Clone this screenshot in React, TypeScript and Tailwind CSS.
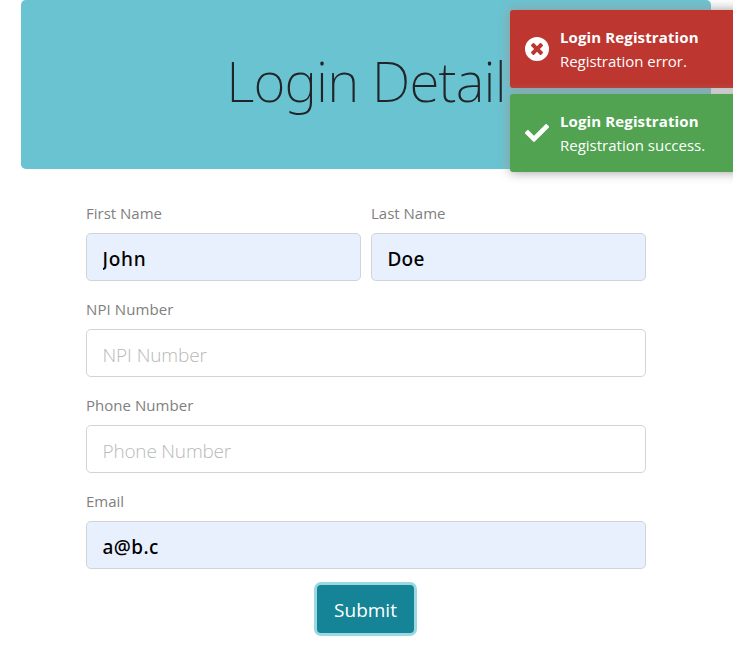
import type { ReactNode } from "react";
import { FaCheck } from "react-icons/fa";

type FieldProps = {
  label: string;
  value?: string;
  labelSpacing: string;
  textSpacing: string;
};

function Field({ label, value, labelSpacing, textSpacing }: FieldProps) {
  return (
    <label className="block min-w-0 flex-1">
      <span className={`block h-6 text-[15px] leading-6 text-[#808080] ${labelSpacing}`}>
        <span>{label}</span>
      </span>
      <input
        className={`mt-2 block h-12 w-full rounded-[4.8px] border border-[#ced4da] pt-[3px] leading-7 outline-none placeholder:font-light placeholder:text-[#b9b9b9] ${textSpacing} ${
          value
            ? "bg-[#e8f0fe] px-[15.5px] font-['Noto_Sans',sans-serif] text-[19px] font-medium text-black"
            : "bg-white px-[15.5px] text-[19px] font-light"
        }`}
        placeholder={label}
        defaultValue={value}
      />
    </label>
  );
}

function ErrorIcon() {
  return (
    <svg width="24" height="24" viewBox="0 0 1536 1536" fill="currentColor" fillRule="evenodd">
      <path d="M768 0a768 768 0 1 1 0 1536a768 768 0 1 1 0-1536zM1149 994q0-26-19-45l-181-181l181-181q19-19 19-45q0-27-19-46l-90-90q-19-19-46-19q-26 0-45 19l-181 181l-181-181q-19-19-45-19q-27 0-46 19l-90 90q-19 19-19 46q0 26 19 45l181 181l-181 181q-19 19-19 45q0 27 19 46l90 90q19 19 46 19q26 0 45-19l181-181l181 181q19 19 45 19q27 0 46-19l90-90q19-19 19-46z" />
    </svg>
  );
}

type ToastProps = { color: string; icon: ReactNode; message: string; spacing: string };

function Toast({ color, icon, message, spacing }: ToastProps) {
  return (
    <div
      className={`flex h-[78px] w-[300px] items-center gap-[11px] rounded-[3px] pl-[15px] text-white shadow-[0_0_12px_#999] ${color}`}
    >
      <span className="shrink-0">{icon}</span>
      <div className="text-[15px] leading-6 whitespace-nowrap">
        <div className="font-bold tracking-[0.12px]">Login Registration</div>
        <div className={spacing}>{message}</div>
      </div>
    </div>
  );
}

export default function App() {
  return (
    <div className="relative h-[663px] w-[733px] overflow-hidden bg-white font-['Open_Sans','Noto_Sans',sans-serif]">
      <main className="ml-[21px] w-[690px]">
        <header className="flex h-[169px] items-center justify-center rounded-[4.8px] bg-[#6ac3d1] pb-[9px]">
          <h1 className="font-['Noto_Sans',sans-serif] text-[55px] leading-[67px] font-extralight tracking-[-0.85px] text-[#212529]">
            Login Detail
          </h1>
        </header>
        <form className="mx-auto flex w-[560px] flex-col gap-4 pt-8" onSubmit={(e) => e.preventDefault()}>
          <div className="flex gap-[10px]">
            <Field label="First Name" value="John" labelSpacing="tracking-normal" textSpacing="tracking-[0.7px]" />
            <Field label="Last Name" value="Doe" labelSpacing="tracking-normal" textSpacing="tracking-[0.2px]" />
          </div>
          <Field label="NPI Number" labelSpacing="tracking-[0.1px]" textSpacing="tracking-[-0.1px]" />
          <Field label="Phone Number" labelSpacing="tracking-[0.04px]" textSpacing="tracking-[-0.2px]" />
          <Field label="Email" value="a@b.c" labelSpacing="tracking-normal" textSpacing="tracking-[0.4px]" />
          <button
            type="submit"
            className="ml-[231px] h-12 w-[97px] rounded-[4px] bg-[#148496] pt-px text-[19px] leading-7 text-white shadow-[0_0_0_3px_#9cd8e1]"
          >
            Submit
          </button>
        </form>
      </main>
      <aside className="absolute top-[10px] left-[510px] flex flex-col gap-[6px]">
        <Toast color="bg-[#bd362f]" icon={<ErrorIcon />} message="Registration error." spacing="tracking-[-0.04px]" />
        <Toast color="bg-[#51a351]" icon={<FaCheck size={24} />} message="Registration success." spacing="tracking-normal" />
      </aside>
    </div>
  );
}
